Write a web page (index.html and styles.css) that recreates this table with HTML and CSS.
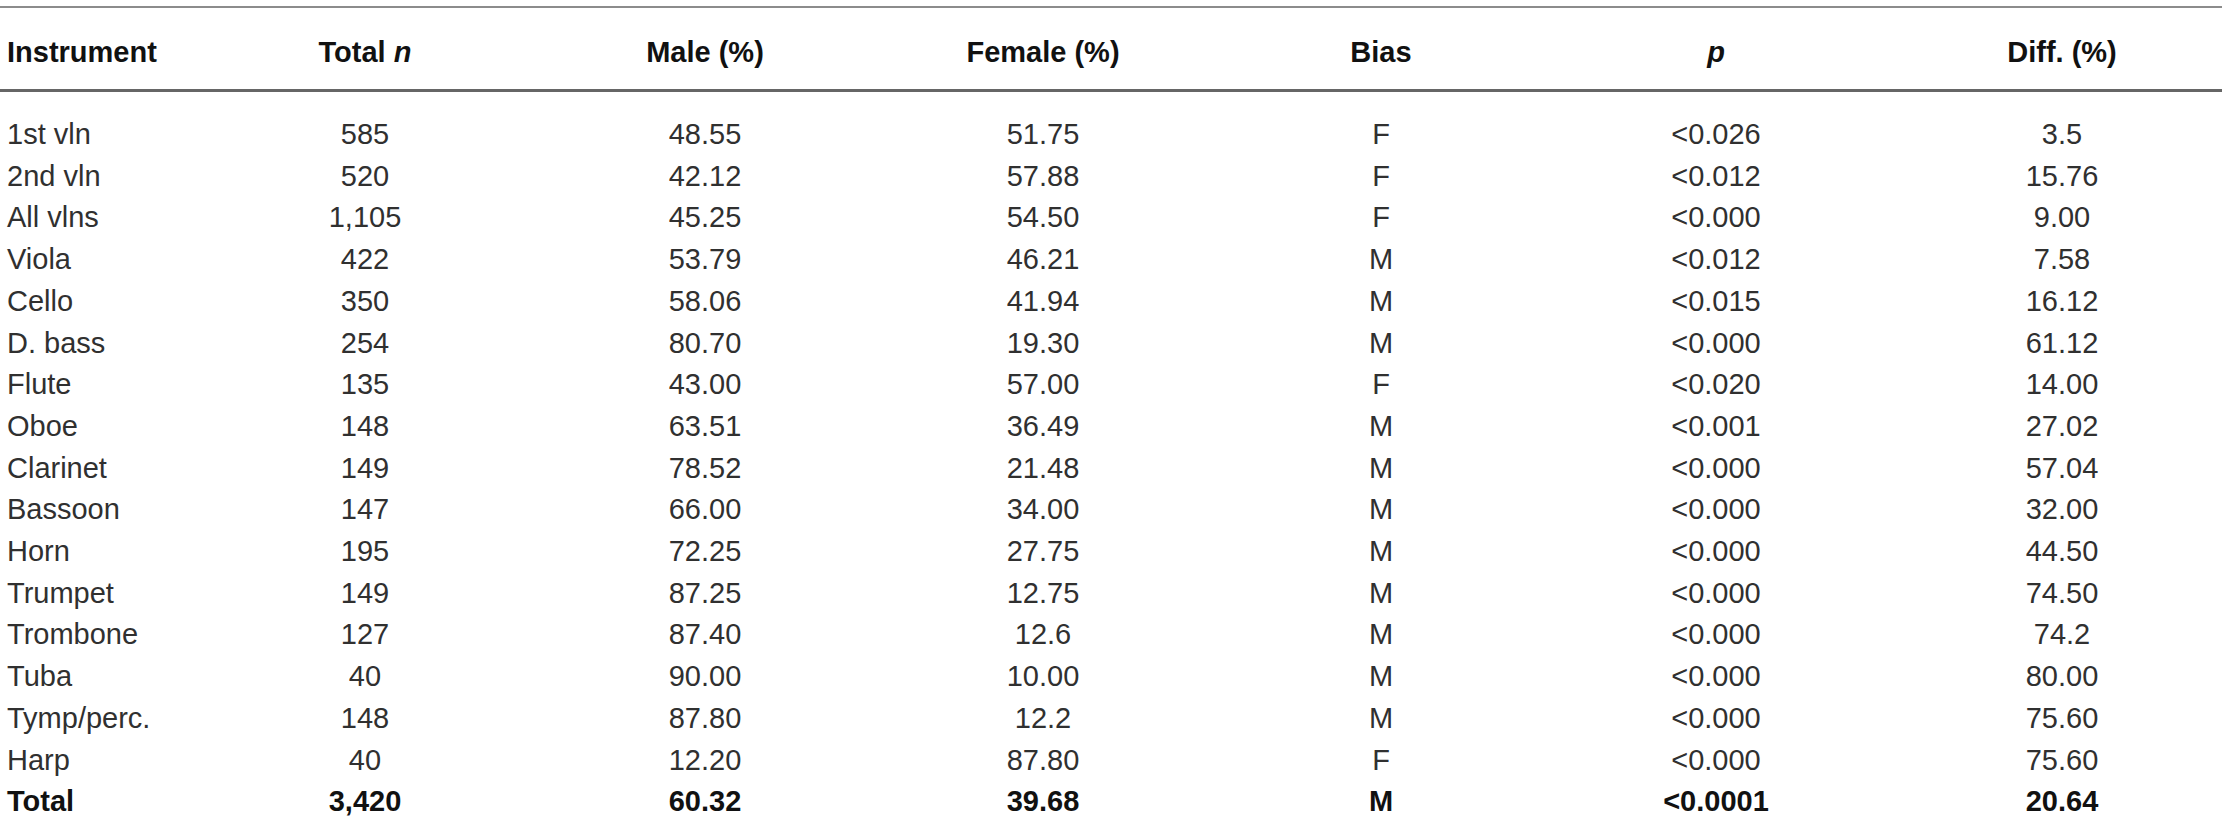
FILE: index.html
```html
<!DOCTYPE html>
<html lang="en">
<head>
    <meta charset="UTF-8">
    <title>Gender bias by instrument</title>
    <link rel="stylesheet" href="styles.css">
</head>
<body>

<table class="data-table">
    <colgroup>
        <col class="col-name">
        <col class="col-n">
        <col class="col-pct">
        <col class="col-pct">
        <col class="col-pct">
        <col class="col-p">
        <col class="col-diff">
    </colgroup>
    <thead>
        <tr>
            <th class="name">Instrument</th>
            <th>Total <i>n</i></th>
            <th>Male (%)</th>
            <th>Female (%)</th>
            <th>Bias</th>
            <th><i>p</i></th>
            <th class="diff">Diff. (%)</th>
        </tr>
    </thead>
    <tbody>
        <tr class="first"><td class="name">1st vln</td><td>585</td><td>48.55</td><td>51.75</td><td>F</td><td>&lt;0.026</td><td class="diff">3.5</td></tr>
        <tr><td class="name">2nd vln</td><td>520</td><td>42.12</td><td>57.88</td><td>F</td><td>&lt;0.012</td><td class="diff">15.76</td></tr>
        <tr><td class="name">All vlns</td><td>1,105</td><td>45.25</td><td>54.50</td><td>F</td><td>&lt;0.000</td><td class="diff">9.00</td></tr>
        <tr><td class="name">Viola</td><td>422</td><td>53.79</td><td>46.21</td><td>M</td><td>&lt;0.012</td><td class="diff">7.58</td></tr>
        <tr><td class="name">Cello</td><td>350</td><td>58.06</td><td>41.94</td><td>M</td><td>&lt;0.015</td><td class="diff">16.12</td></tr>
        <tr><td class="name">D. bass</td><td>254</td><td>80.70</td><td>19.30</td><td>M</td><td>&lt;0.000</td><td class="diff">61.12</td></tr>
        <tr><td class="name">Flute</td><td>135</td><td>43.00</td><td>57.00</td><td>F</td><td>&lt;0.020</td><td class="diff">14.00</td></tr>
        <tr><td class="name">Oboe</td><td>148</td><td>63.51</td><td>36.49</td><td>M</td><td>&lt;0.001</td><td class="diff">27.02</td></tr>
        <tr><td class="name">Clarinet</td><td>149</td><td>78.52</td><td>21.48</td><td>M</td><td>&lt;0.000</td><td class="diff">57.04</td></tr>
        <tr><td class="name">Bassoon</td><td>147</td><td>66.00</td><td>34.00</td><td>M</td><td>&lt;0.000</td><td class="diff">32.00</td></tr>
        <tr><td class="name">Horn</td><td>195</td><td>72.25</td><td>27.75</td><td>M</td><td>&lt;0.000</td><td class="diff">44.50</td></tr>
        <tr><td class="name">Trumpet</td><td>149</td><td>87.25</td><td>12.75</td><td>M</td><td>&lt;0.000</td><td class="diff">74.50</td></tr>
        <tr><td class="name">Trombone</td><td>127</td><td>87.40</td><td>12.6</td><td>M</td><td>&lt;0.000</td><td class="diff">74.2</td></tr>
        <tr><td class="name">Tuba</td><td>40</td><td>90.00</td><td>10.00</td><td>M</td><td>&lt;0.000</td><td class="diff">80.00</td></tr>
        <tr><td class="name">Tymp/perc.</td><td>148</td><td>87.80</td><td>12.2</td><td>M</td><td>&lt;0.000</td><td class="diff">75.60</td></tr>
        <tr><td class="name">Harp</td><td>40</td><td>12.20</td><td>87.80</td><td>F</td><td>&lt;0.000</td><td class="diff">75.60</td></tr>
        <tr class="total"><td class="name">Total</td><td>3,420</td><td>60.32</td><td>39.68</td><td>M</td><td>&lt;0.0001</td><td class="diff">20.64</td></tr>
    </tbody>
</table>

</body>
</html>
```

FILE: styles.css
```css
body {
    margin: 0;
    background: #ffffff;
    font-family: 'Liberation Sans', Arial, sans-serif;
    color: #303030;
}

.data-table {
    width: 2222px;
    margin-top: 6px;
    border-collapse: separate;
    border-spacing: 0;
    table-layout: fixed;
    font-size: 29px;
}

.col-name { width: 194px; }
.col-n { width: 342px; }
.col-pct { width: 338px; }
.col-p { width: 332px; }
.col-diff { width: 340px; }

th,
td {
    padding: 0;
    text-align: center;
    white-space: nowrap;
}

th {
    padding-top: 27px;
    padding-bottom: 20px;
    line-height: 34px;
    font-weight: bold;
    color: #111111;
    border-top: 2px solid #8c8c8c;
    border-bottom: 3px solid #666666;
}

td {
    line-height: 41.7px;
}

.name {
    text-align: left;
    padding-left: 7px;
}

.diff {
    padding-left: 20px;
}

.first td {
    padding-top: 22px;
}

.total td {
    font-weight: bold;
    color: #111111;
}
```
